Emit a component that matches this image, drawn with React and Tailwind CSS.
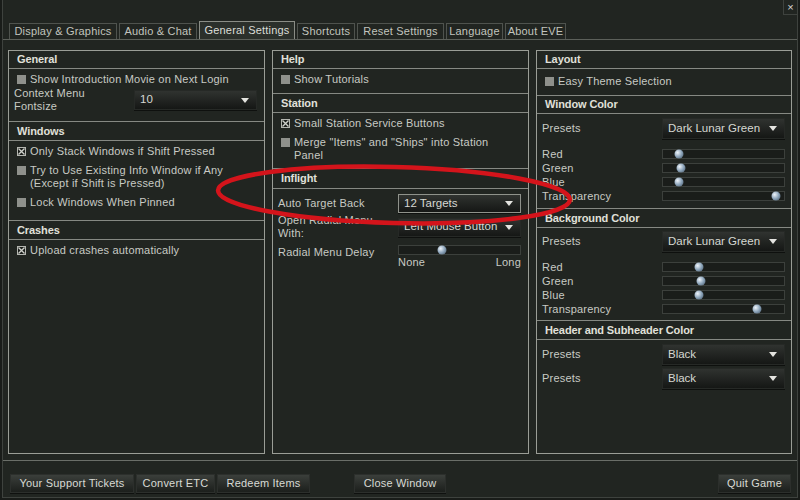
import React from 'react';

const tabs = [
  { label: 'Display & Graphics', w: 'w-[108px]' },
  { label: 'Audio & Chat', w: 'w-[78px]' },
  { label: 'General Settings', w: 'w-[96px]', active: true },
  { label: 'Shortcuts', w: 'w-[58px]' },
  { label: 'Reset Settings', w: 'w-[87px]' },
  { label: 'Language', w: 'w-[57px]' },
  { label: 'About EVE', w: 'w-[61px]' },
];

const Check = ({ on }) =>
  on ? (
    <span className="w-[9px] h-[9px] border border-[#b4b6b0] bg-[#1a1d1a] flex items-center justify-center shrink-0">
      <svg width="7" height="7" viewBox="0 0 7 7">
        <path d="M0.5 0.5L6.5 6.5M6.5 0.5L0.5 6.5" stroke="#cfd1cb" strokeWidth="1.4" />
      </svg>
    </span>
  ) : (
    <span className="block w-[9px] h-[9px] bg-[#8f918c] shrink-0" />
  );

const CheckRow = ({ on, children }) => (
  <div className="flex items-start gap-[4px] pl-[8px] leading-[13px]">
    <span className="mt-[2px]">
      <Check on={on} />
    </span>
    <span>{children}</span>
  </div>
);

const Header = ({ children, h }) => (
  <div className={`${h} flex items-center pl-[8px] text-[11px] font-bold tracking-[-0.1px] text-[#e0e0da] border-b border-[#868983]`}>
    {children}
  </div>
);

const Select = ({ value, outlined, h }) => (
  <div
    className={`w-[123px] ${h} flex items-center justify-between pl-[5px] pr-[7px] bg-linear-to-b from-[#303330] to-[#151715] border ${
      outlined ? 'border-[#8f928b]' : 'border-[#262926]'
    } text-[11.5px] tracking-[0px] text-[#d6d8d2] shadow-[0_1px_0_#0e100e]`}
  >
    <span className="whitespace-nowrap">{value}</span>
    <svg width="8" height="5" viewBox="0 0 8 5" className="shrink-0">
      <path d="M0 0H8L4 5Z" fill="#e4e4e0" />
    </svg>
  </div>
);

const Slider = ({ pos }) => (
  <div className="relative w-[123px] h-[10px] border border-[#3c403c] bg-[#1a1d1a]">
    <span
      className="absolute top-1/2 w-[9px] h-[9px] rounded-full -translate-x-1/2 -translate-y-1/2 bg-[radial-gradient(circle_at_35%_35%,#eef4fa,#8aa2b8_50%,#3e4e5e)]"
      style={{ left: pos }}
    />
  </div>
);

const SliderRow = ({ label, pos }) => (
  <div className="h-[14px] flex items-center justify-between pl-[5px] pr-[6px]">
    <span>{label}</span>
    <Slider pos={pos} />
  </div>
);

const Label = ({ children, className = '' }) => (
  <span className={`w-[120px] leading-[13px] ${className}`}>{children}</span>
);

const Button = ({ children, w }) => (
  <div className={`${w} h-[19px] flex items-center justify-center bg-linear-to-b from-[#3b3f3b] to-[#1c1f1c] border border-[#2c2f2c] text-[#d8dad4] text-[11px] shadow-[0_1px_0_#0f110f]`}>
    {children}
  </div>
);

export default function App() {
  return (
    <div className="w-[800px] h-[500px] bg-[#191c19] relative overflow-hidden font-['Liberation_Sans',Arial,sans-serif] text-[11px] tracking-[0.2px] text-[#c8cac4]">
      <div className="h-[498px] ml-[2px] mr-[2px] border-l border-r border-b border-[#3e423e] bg-[#212521] flex flex-col">
        {/* title bar */}
        <div className="h-[21px] flex justify-end">
          <div className="w-[14px] h-[15px] border-l border-b border-[#3e423e] flex items-center justify-center text-[#d8d8d4] text-[11px]">
            ×
          </div>
        </div>

        {/* tabs */}
        <div className="h-[19px] flex items-end gap-[2px] pl-[6px] border-b border-[#5c605a]">
          {tabs.map((t) => (
            <div
              key={t.label}
              className={`${t.w} flex items-center justify-center border border-b-0 ${
                t.active
                  ? 'h-[18px] border-[#8a8d86] bg-[#2b302b] text-[#dcded8]'
                  : 'h-[16px] border-[#4f534e] text-[#c2c4be]'
              }`}
            >
              {t.label}
            </div>
          ))}
        </div>

        {/* panels */}
        <div className="mt-[10px] flex gap-[7px] pl-[5px]">
          {/* left */}
          <div className="w-[257px] h-[404px] border border-[#9a9d96] flex flex-col">
            <Header h="h-[18px]">General</Header>
            <div className="h-[53px] border-b border-[#868983] pt-[4px]">
              <CheckRow>Show Introduction Movie on Next Login</CheckRow>
              <div className="mt-[1px] h-[26px] flex items-center pl-[5px]">
                <Label>
                  Context Menu
                  <br />
                  Fontsize
                </Label>
                <Select value="10" h="h-[20px]" />
              </div>
            </div>
            <Header h="h-[19px]">Windows</Header>
            <div className="h-[80px] border-b border-[#868983] pt-[4px] flex flex-col gap-[6px]">
              <CheckRow on>Only Stack Windows if Shift Pressed</CheckRow>
              <CheckRow>
                Try to Use Existing Info Window if Any
                <br />
                (Except if Shift is Pressed)
              </CheckRow>
              <CheckRow>Lock Windows When Pinned</CheckRow>
            </div>
            <Header h="h-[19px]">Crashes</Header>
            <div className="pt-[4px]">
              <CheckRow on>Upload crashes automatically</CheckRow>
            </div>
          </div>

          {/* middle */}
          <div className="w-[257px] h-[404px] border border-[#9a9d96] flex flex-col">
            <Header h="h-[18px]">Help</Header>
            <div className="h-[25px] border-b border-[#868983] pt-[4px]">
              <CheckRow>Show Tutorials</CheckRow>
            </div>
            <Header h="h-[19px]">Station</Header>
            <div className="h-[56px] border-b border-[#868983] pt-[4px] flex flex-col gap-[6px]">
              <CheckRow on>Small Station Service Buttons</CheckRow>
              <CheckRow>
                Merge "Items" and "Ships" into Station
                <br />
                Panel
              </CheckRow>
            </div>
            <Header h="h-[20px]">Inflight</Header>
            <div className="pt-[5px] pl-[5px]">
              <div className="flex items-center">
                <Label>Auto Target Back</Label>
                <Select value="12 Targets" outlined h="h-[19px]" />
              </div>
              <div className="mt-[1px] h-[26px] flex items-center">
                <Label>
                  Open Radial Menu
                  <br />
                  With:
                </Label>
                <Select value="Left Mouse Button" h="h-[19px]" />
              </div>
              <div className="mt-[5px] flex items-start">
                <Label className="mt-[1px]">Radial Menu Delay</Label>
                <div className="flex flex-col">
                  <Slider pos={43} />
                  <div className="w-[123px] flex justify-between leading-[13px] mt-[1px]">
                    <span>None</span>
                    <span>Long</span>
                  </div>
                </div>
              </div>
            </div>
          </div>

          {/* right */}
          <div className="w-[256px] h-[404px] border border-[#9a9d96] flex flex-col">
            <Header h="h-[18px]">Layout</Header>
            <div className="h-[27px] border-b border-[#868983] pt-[6px]">
              <CheckRow>Easy Theme Selection</CheckRow>
            </div>
            <Header h="h-[18px]">Window Color</Header>
            <div className="h-[95px] border-b border-[#868983] pt-[4px]">
              <div className="flex items-center justify-between pl-[5px] pr-[6px]">
                <span>Presets</span>
                <Select value="Dark Lunar Green" h="h-[21px]" />
              </div>
              <div className="mt-[8px]">
                <SliderRow label="Red" pos={16} />
                <SliderRow label="Green" pos={18} />
                <SliderRow label="Blue" pos={16} />
                <SliderRow label="Transparency" pos={113} />
              </div>
            </div>
            <Header h="h-[19px]">Background Color</Header>
            <div className="h-[93px] border-b border-[#868983] pt-[3px]">
              <div className="flex items-center justify-between pl-[5px] pr-[6px]">
                <span>Presets</span>
                <Select value="Dark Lunar Green" h="h-[21px]" />
              </div>
              <div className="mt-[8px]">
                <SliderRow label="Red" pos={36} />
                <SliderRow label="Green" pos={38} />
                <SliderRow label="Blue" pos={36} />
                <SliderRow label="Transparency" pos={94} />
              </div>
            </div>
            <Header h="h-[19px]">Header and Subheader Color</Header>
            <div className="pt-[4px] flex flex-col gap-[3px]">
              <div className="flex items-center justify-between pl-[5px] pr-[6px]">
                <span>Presets</span>
                <Select value="Black" h="h-[21px]" />
              </div>
              <div className="flex items-center justify-between pl-[5px] pr-[6px]">
                <span>Presets</span>
                <Select value="Black" h="h-[21px]" />
              </div>
            </div>
          </div>
        </div>

        {/* footer */}
        <div className="mt-[6px] border-t border-[#6a6e68]" />
        <div className="mt-[13px] flex items-center pl-[7px] pr-[6px]">
          <div className="flex gap-[2px]">
            <Button w="w-[124px]">Your Support Tickets</Button>
            <Button w="w-[79px]">Convert ETC</Button>
            <Button w="w-[93px]">Redeem Items</Button>
          </div>
          <div className="ml-[44px]">
            <Button w="w-[92px]">Close Window</Button>
          </div>
          <div className="ml-auto">
            <Button w="w-[73px]">Quit Game</Button>
          </div>
        </div>
      </div>

      {/* red annotation ellipse */}
      <svg className="absolute left-[213px] top-[162px]" width="362" height="72" viewBox="0 0 362 72">
        <ellipse cx="181" cy="33" rx="176" ry="28" fill="none" stroke="#d4141b" strokeWidth="4.5" transform="rotate(1.5 181 33)" />
      </svg>
    </div>
  );
}
